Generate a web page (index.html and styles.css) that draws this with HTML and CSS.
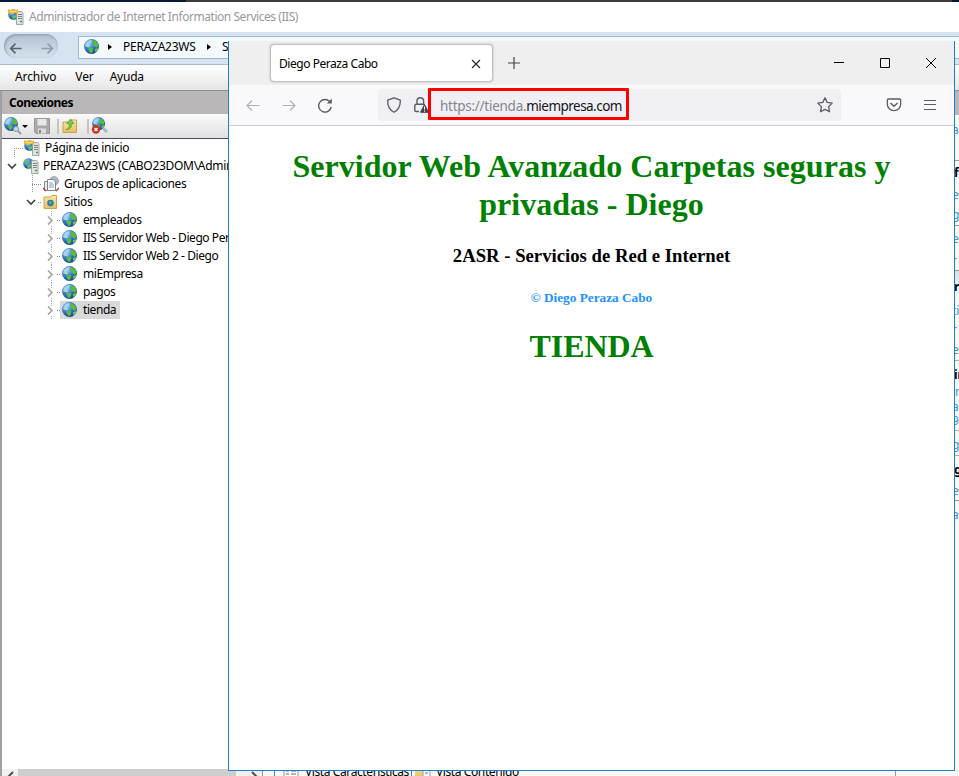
FILE: index.html
```html
<!DOCTYPE html>
<html lang="es">
<head>
<meta charset="utf-8">
<title>Administrador de Internet Information Services (IIS)</title>
<link rel="stylesheet" href="styles.css">
</head>
<body>
<svg class="defs" width="0" height="0">
  <defs>
    <radialGradient id="sea" cx=".35" cy=".3" r=".8"><stop offset="0" stop-color="#9ccaf8"/><stop offset=".5" stop-color="#3474cc"/><stop offset="1" stop-color="#123a8c"/></radialGradient>
    <linearGradient id="fold" x2="0" y2="1"><stop offset="0" stop-color="#fbe9a8"/><stop offset="1" stop-color="#e6bd5c"/></linearGradient>
  </defs>
  <symbol id="globe" viewBox="0 0 16 16"><circle cx="7.500" cy="7.500" r="7.400" fill="url(#sea)"/><path d="M2 4Q4 1 8 1L7 4 5 5 6 8 3 8 1 7Z" fill="#a5d4f0"/><path d="M9 1Q13 2 14.500 6L13 9 10 7 8 4ZM4 8L9 9 9 12 7 14.500 5 12Z" fill="#58bd3e"/><path d="M11 10L14.500 9Q14 12 11 13Z" fill="#71c94b"/></symbol>
  <symbol id="server" viewBox="0 0 16 16"><circle cx="5.500" cy="5.500" r="5.300" fill="url(#sea)"/><path d="M1.500 4L5 1 6 4 3 6ZM4 7L8 6 8 9 5 10.500Z" fill="#67bf55"/><path d="M8.500 2.500H13.500L15 4V15.500H8.500Z" fill="#dde1df" stroke="#8b9492" stroke-width=".8"/><path d="M10 5.500H14M10 7.500H14M10 9.500H14" stroke="#7c8886"/><path d="M12 12.500H14" stroke="#28b03c" stroke-width="1.500"/></symbol>
  <symbol id="home" viewBox="0 0 16 16"><use href="#server"/><path d="M0 0L3 1 5 .3 7 1.500 10 0V5L7 4 4 5 0 4Z" fill="#f3b92c"/><path d="M2 2L5 3 8 2" fill="none" stroke="#ffe692"/></symbol>
  <symbol id="pools" viewBox="0 0 16 16"><circle cx="11" cy="5" r="4.500" fill="#97bcd8" stroke="#d99a8c"/><path d="M1.500 5.500H9V14.500H1.500Z" fill="#eee" stroke="#888"/><path d="M4.500 3.500H10L12.500 6V14.500H4.500Z" fill="#fff" stroke="#718690"/><path d="M6 7H10M6 9H11M6 11H11" stroke="#89a"/><path d="M0 12L3 15M16 12L13 15" stroke="#c33a3a" stroke-width="1.500"/></symbol>
  <symbol id="sites" viewBox="0 0 16 16"><path d="M1 3H8L9 1.500H13.500V14.500H1Z" fill="url(#fold)" stroke="#cfa24c"/><circle cx="7.500" cy="9" r="3.300" fill="#277bb9"/><path d="M5.500 8L8.500 7 8 11Z" fill="#60c34b"/></symbol>
  <symbol id="arrow" viewBox="0 0 16 16"><path d="M14.500 8.500H2M7 3.500L2 8.500L7 13.500" fill="none" stroke="currentColor" stroke-width="1.200"/></symbol>
  <symbol id="boldarrow" viewBox="0 0 14 14"><path d="M13.500 7H2M7 1.800L1.800 7L7 12.200" fill="none" stroke="currentColor" stroke-width="1.800"/></symbol>
  <symbol id="down" viewBox="0 0 10 10"><path d="M1 3L5 7L9 3" fill="none" stroke="#404040" stroke-width="1.600"/></symbol>
  <symbol id="right" viewBox="0 0 10 10"><path d="M3 1.500L7 5.500L3 9.500" fill="none" stroke="#a6a6a6" stroke-width="1.700"/></symbol>
</svg>

<div class="iis">
  <div class="desk"></div>
  <header class="title"><svg class="i16"><use href="#home"/></svg><span>Administrador de Internet Information Services (IIS)</span></header>
  <div class="nav">
    <div class="pill"><svg><use href="#boldarrow"/></svg><svg class="flip"><use href="#boldarrow"/></svg></div>
    <div class="crumbs"><svg class="i16"><use href="#globe"/></svg><i class="tri"></i><span class="crumb">PERAZA23WS</span><i class="tri"></i><span>Sitios</span></div>
  </div>
  <nav class="menu"><span>Archivo</span><span>Ver</span><span class="help">Ayuda</span></nav>
  <div class="main">
    <section class="conn">
      <h2>Conexiones</h2>
      <div class="tools">
        <svg class="i18" viewBox="0 0 18 18"><use href="#globe" width="15" height="15"/><circle cx="12" cy="12" r="2.500" fill="#c6dce9" stroke="#7d98ab"/><path d="M14 14L17 17" stroke="#889aa5" stroke-width="2"/></svg>
        <i class="drop"></i>
        <svg class="i16 disk" viewBox="0 0 16 16"><path d="M.5.500H15.500V15.500H2L.5 14Z" fill="#a9a9a9" stroke="#999"/><path d="M3.500 1H12.500V7.500H3.500Z" fill="#e8e8e8"/><path d="M4 10.500H12V15.500H4Z" fill="#ddd"/><path d="M5 12H7V15H5Z" fill="#888"/></svg>
        <i class="sep"></i>
        <svg class="i16" viewBox="0 0 16 16"><path d="M1 4H7L9 2H14.500V14.500H1Z" fill="url(#fold)" stroke="#c7a453"/><path d="M4 12Q8 10 7 5.500H4.500L8.500 1 12 5.500H10Q10 11 4 12Z" fill="#72cb45" stroke="#3d9a2d" stroke-width=".6"/></svg>
        <i class="sep last"></i>
        <svg class="i18" viewBox="0 0 18 18"><use href="#globe" x="1" width="14" height="14"/><path d="M12 11L16 15" stroke="#a0bacb" stroke-width="3"/><circle cx="5" cy="12.500" r="4.200" fill="#d02c24"/><path d="M3.500 11L6.500 14M6.500 11L3.500 14" stroke="#fff" stroke-width="1.300"/></svg>
      </div>
      <div class="tree">
        <div class="row r0"><svg class="i16"><use href="#home"/></svg><span>Página de inicio</span></div>
        <div class="row r1"><svg class="tw"><use href="#down"/></svg><i class="dots"></i><svg class="i16"><use href="#server"/></svg><span class="long">PERAZA23WS (CABO23DOM\Administrador)</span></div>
        <div class="row r2"><i class="dots wide"></i><svg class="i16"><use href="#pools"/></svg><span class="pool">Grupos de aplicaciones</span></div>
        <div class="row r3"><svg class="tw"><use href="#down"/></svg><i class="dots"></i><svg class="i16"><use href="#sites"/></svg><span>Sitios</span></div>
        <div class="row site"><svg class="tw"><use href="#right"/></svg><i class="dots"></i><svg class="i16"><use href="#globe"/></svg><span>empleados</span></div>
        <div class="row site"><svg class="tw"><use href="#right"/></svg><i class="dots"></i><svg class="i16"><use href="#globe"/></svg><span>IIS Servidor Web - Diego Peraza</span></div>
        <div class="row site"><svg class="tw"><use href="#right"/></svg><i class="dots"></i><svg class="i16"><use href="#globe"/></svg><span>IIS Servidor Web 2 - Diego</span></div>
        <div class="row site"><svg class="tw"><use href="#right"/></svg><i class="dots"></i><svg class="i16"><use href="#globe"/></svg><span>miEmpresa</span></div>
        <div class="row site"><svg class="tw"><use href="#right"/></svg><i class="dots"></i><svg class="i16"><use href="#globe"/></svg><span>pagos</span></div>
        <div class="row site sel"><svg class="tw"><use href="#right"/></svg><i class="dots"></i><div class="hit"><svg class="i16"><use href="#globe"/></svg><span>tienda</span></div></div>
      </div>
      <div class="hscroll"><svg viewBox="0 0 16 8"><path d="M11 3L7 7L8 8" fill="none" stroke="#505050" stroke-width="2"/></svg><i></i><svg viewBox="0 0 16 8"><path d="M6 3L10 7L9 8" fill="none" stroke="#505050" stroke-width="2"/></svg></div>
    </section>
    <section class="center">
      <div class="views">
        <span class="view on"><svg class="i16" viewBox="0 0 16 16"><path d="M1 .5H15V15H1Z" fill="#fff" stroke="#999"/><path d="M3 5H6M3 8H6M3 11H6M8 5H13M8 8H13M8 11H13" stroke="#667"/></svg><b>Vista Características</b></span>
        <span class="view"><svg class="i16" viewBox="0 0 16 16"><path d="M0 2H9V15H0Z" fill="url(#fold)"/><path d="M8 3H15V15H8Z" fill="#f5f8fc" stroke="#99a"/><path d="M10 7H13M10 10H13" stroke="#48c"/></svg><b>Vista Contenido</b></span>
      </div>
    </section>
    <aside class="actions">
      <p class="a1">ar</p><p class="a2 k">fi</p><p class="a3">e</p><p class="a4">g</p><p class="a5">el</p><p class="a6">r</p><p class="a7 k">ra</p><p class="a8">ti</p><p class="a9">r</p><p class="a10">e</p><p class="a11 k">in</p><p class="a12">in</p><p class="a13">a</p><p class="a14">9</p><p class="a15">g</p><p class="a16 k">g</p><p class="a17">e</p><p class="a18">a</p>
    </aside>
  </div>
</div>

<div class="browser">
  <div class="tabs">
    <div class="tab"><span>Diego Peraza Cabo</span><svg viewBox="0 0 10 10" width="10" height="10"><path d="M1 1L9 9M9 1L1 9" stroke="#222" stroke-width="1.100"/></svg></div>
    <svg class="plus" viewBox="0 0 12 12"><path d="M6 0V12M0 6H12" stroke="#444" stroke-width="1.200"/></svg>
    <div class="wc">
      <svg viewBox="0 0 12 12"><path d="M1 5.500H11" stroke="#000"/></svg>
      <svg viewBox="0 0 12 12"><path d="M1.500 1.500H10.500V10.500H1.500Z" fill="none" stroke="#000"/></svg>
      <svg viewBox="0 0 12 12"><path d="M1 1L11 11M11 1L1 11" stroke="#000"/></svg>
    </div>
  </div>
  <div class="bar">
    <svg class="b off"><use href="#arrow"/></svg>
    <svg class="b off flip fwd"><use href="#arrow"/></svg>
    <svg class="b" viewBox="0 0 16 16"><path d="M14.200 10A6.300 6.300 0 1 1 12.600 4.500" fill="none" stroke="#5b5b66" stroke-width="1.400"/><path d="M14.800 1.500V6.500H9.800Z" fill="#5b5b66"/></svg>
    <div class="url">
      <svg class="b" viewBox="0 0 16 16"><path d="M8 .8L14.300 3.200Q14.800 11.500 8 15.200Q1.200 11.500 1.700 3.200Z" fill="none" stroke="#5b5b66" stroke-width="1.300" stroke-linejoin="round"/></svg>
      <svg class="b lock" viewBox="0 0 16 16"><path d="M4 7V4A3.300 3.300 0 0 1 10.600 4V7M6 14.500H3A1.200 1.200 0 0 1 1.800 13.300V8.500A1.200 1.200 0 0 1 3 7.300H11.500" fill="none" stroke="#5b5b66" stroke-width="1.400"/><path d="M11.500 7.500L15.500 15.300H7.500Z" fill="#45454f" stroke="#45454f" stroke-linejoin="round"/><path d="M11.500 9.500V12.500M11.500 13.500V14.700" stroke="#fff"/></svg>
      <div class="mark"><span>https://tienda.</span><em>miempresa.com</em></div>
      <svg class="b star" viewBox="0 0 16 16"><path d="M8 .8L10.200 5.400 15.200 6.100 11.600 9.600 12.500 14.800 8 12.400 3.500 14.800 4.400 9.600 .8 6.100 5.800 5.400Z" fill="none" stroke="#5b5b66" stroke-width="1.300" stroke-linejoin="round"/></svg>
    </div>
    <svg class="b pocket" viewBox="0 0 16 16"><path d="M2.500 2H13.500A1.300 1.300 0 0 1 14.700 3.300V7A6.700 6.700 0 0 1 1.300 7V3.300A1.300 1.300 0 0 1 2.500 2Z" fill="none" stroke="#5b5b66" stroke-width="1.300"/><path d="M4.500 6L8 9.300 11.500 6" fill="none" stroke="#5b5b66" stroke-width="1.500"/></svg>
    <svg class="b burger" viewBox="0 0 16 16"><path d="M2 3.500H14M2 7.500H14M2 12.500H14" stroke="#5b5b66" stroke-width="1.200"/></svg>
  </div>
  <main class="page">
    <h1>Servidor Web Avanzado Carpetas seguras y privadas - Diego</h1>
    <h3>2ASR - Servicios de Red e Internet</h3>
    <h5>© Diego Peraza Cabo</h5>
    <h1 class="shop">TIENDA</h1>
  </main>
</div>
</body>
</html>
```
FILE: styles.css
```css
* { box-sizing: border-box; }
body { margin: 0; width: 959px; height: 776px; overflow: hidden; position: relative; background: #fff; font: 12px/18px "Noto Sans", "Open Sans", sans-serif; color: #000; }
h1, h2, h3, h5, p { margin: 0; }
svg { display: block; flex: none; }
.defs { position: absolute; }
.i16 { width: 16px; height: 16px; }
.i18 { width: 18px; height: 18px; }
.flip { transform: scaleX(-1); }

.iis { width: 959px; height: 776px; display: flex; flex-direction: column; overflow: hidden; white-space: nowrap; }
.desk { height: 2px; flex: none; background: linear-gradient(90deg, #071a33 186px, #3d3b3b 186px 952px, #061532 952px); }
.title { height: 30px; flex: none; display: flex; align-items: center; padding-left: 8px; gap: 5px; color: #999; letter-spacing: -.45px; background: #fff; }
.nav { height: 33px; flex: none; display: flex; padding: 4px 0 5px 4px; background: #d6e4f1; border-bottom: 1px solid #a9b9ca; }
.pill { width: 54px; height: 24px; margin-top: -2px; border-radius: 12px; background: linear-gradient(#b3c1d0, #d5e1ed); box-shadow: inset 1px 1px 3px #8798aa; display: flex; align-items: center; justify-content: space-between; padding: 4px 4px 0 5px; color: #59636d; }
.pill svg { width: 13px; height: 13px; }
.pill .flip { color: #8e9dac; }
.crumbs { flex: 1; margin-left: 20px; height: 23px; border: 1px solid #a4b5c8; border-right: 0; background: #f4f9fd; display: flex; align-items: center; padding: 0 0 2px 5px; }
.tri { width: 0; height: 0; border: 3.5px solid transparent; border-left: 4px solid #000; border-right: 0; margin: 0 11px 0 8px; }
.crumb { width: 73px; letter-spacing: -.25px; margin-right: 3px; }
.menu { height: 25px; flex: none; display: flex; padding: 3px 15px; gap: 19px; background: linear-gradient(#fff, #e5e5e5); letter-spacing: -.1px; }
.menu .help { margin-left: -3px; letter-spacing: -.25px; }
.main { flex: 1; display: flex; min-height: 0; border-top: 1px solid #8d8d8d; }
.conn { width: 263px; flex: none; display: flex; flex-direction: column; border-left: 2px solid #a0a0a0; border-right: 1px solid #999; }
.conn h2 { height: 23px; font: bold 12px/23px "Noto Sans", sans-serif; letter-spacing: -.5px; padding-left: 7px; background: #b9b7b8; }
.tools { height: 25px; display: flex; align-items: center; padding-left: 2px; background: linear-gradient(#fafafa, #e0e0e0); border-bottom: 1px solid #47466b; }
.drop { border: 3px solid transparent; border-top: 3px solid #000; border-bottom: 0; margin-right: 6px; }
.disk { margin-right: 7px; }
.sep { width: 2px; height: 15px; background: #c8c5b4; margin-right: 3px; }
.sep.last { margin: 0 2px 0 9px; }
.tree { flex: 1; background: #fff; overflow: hidden; }
.row { height: 18px; display: flex; align-items: center; }
.row span { margin-left: 5px; letter-spacing: -.28px; }
.row .long { letter-spacing: -.3px; margin-left: 4px; }
.row .pool { letter-spacing: -.38px; }
.tw { width: 10px; height: 10px; }
.dots { width: 3px; margin: 0 2px; border-top: 1px dotted #888; }
.dots.wide { width: 9px; }
.r0 { padding-left: 22px; background: repeating-linear-gradient(90deg, #999 0 1px, transparent 1px 2px) 12px 9px / 10px 1px no-repeat, repeating-linear-gradient(#999 0 1px, transparent 1px 2px) 12px 9px / 1px 9px no-repeat; }
.r1 { padding-left: 5px; }
.r1 .dots { margin: 0 2px 0 3px; }
.r1 .i16 { margin-left: 1px; }
.r2 { padding-left: 28px; background: repeating-linear-gradient(#999 0 1px, transparent 1px 2px) 30px 0 / 1px 100% no-repeat; }
.r3 { padding-left: 24px; }
.site { padding-left: 43px; background: repeating-linear-gradient(#aaa 0 1px, transparent 1px 2px) 49px 0 / 1px 5px no-repeat, repeating-linear-gradient(#aaa 0 1px, transparent 1px 2px) 49px 15px / 1px 3px no-repeat; }
.site span { margin-left: 5px; letter-spacing: -.43px; }
.hit { display: flex; align-items: center; height: 18px; background: #d9d9d9; margin-left: -2px; padding: 0 4px 0 2px; }
.hscroll { height: 7px; flex: none; display: flex; background: #f0f0f0; }
.hscroll svg { width: 16px; height: 8px; }
.hscroll svg:last-child { margin-left: 10px; }
.hscroll i { width: 218px; background: #cdcdcd; }
.center { flex: 1; display: flex; flex-direction: column; justify-content: flex-end; background: #f7f7f7; }
.views { height: 11px; display: flex; overflow: hidden; margin-left: 11px; width: 622px; border-right: 1px solid #999; }
.view { display: flex; gap: 5px; height: 18px; padding-left: 3px; margin-top: -2px; }
.view b { font-weight: 400; letter-spacing: -.4px; }
.on { border: 1px solid #3189d4; width: 138px; padding-left: 8px; gap: 6px; margin-top: -3px; }

.actions { width: 4px; flex: none; background: #f7f7f7; overflow: hidden; color: #4c94cc; border-top: 24px solid #b9b7b8; display: flex; flex-direction: column; }
.actions p { flex: none; height: 20px; line-height: 20px; text-indent: -3px; overflow: hidden; }
.actions .k { color: #000; font-weight: 700; text-indent: -1px; }
.actions .a1 { height: 46px; line-height: 30px; border-bottom: 1px solid #999; }
.actions .a2 { height: 24px; line-height: 24px; }
.actions .a4 { height: 21px; border-bottom: 1px solid #999; }
.actions .a5 { height: 25px; line-height: 25px; }
.actions .a6 { height: 20px; border-bottom: 1px solid #999; }
.actions .a7 { height: 30px; line-height: 32px; background: linear-gradient(#ddd, #f7f7f7 20px); }
.actions .a8 { height: 19px; }
.actions .a10 { height: 21px; border-bottom: 1px solid #aaa; }
.actions .a11 { height: 25px; line-height: 27px; }
.actions .a12 { height: 14px; line-height: 12px; }
.actions .a13 { height: 14px; line-height: 14px; }
.actions .a14 { height: 17px; line-height: 14px; border-bottom: 1px solid #aaa; }
.actions .a15 { height: 25px; line-height: 27px; border-bottom: 1px solid #aaa; }
.actions .a16 { height: 25px; line-height: 28px; }
.actions .a17 { border-bottom: 1px solid #999; }
.actions .a18 { height: 28px; line-height: 28px; }

.browser { position: absolute; left: 228px; top: 41px; width: 727px; height: 730px; border: 1px solid #1a80d0; border-top: 0; background: #fff; display: flex; flex-direction: column; }
.tabs { height: 44px; flex: none; background: #efefef; display: flex; align-items: center; padding-left: 41px; }
.tab { width: 223px; height: 38px; border: 1px solid #c0c0c4; border-radius: 4px; background: #fff; box-shadow: 0 0 2px #aaa; display: flex; align-items: center; justify-content: space-between; padding: 1px 11px 0 8px; letter-spacing: -.45px; }
.plus { width: 12px; height: 12px; margin-left: 15px; }
.wc { margin-left: auto; display: flex; gap: 34px; padding-right: 17px; }
.wc svg { width: 12px; height: 12px; }
.bar { height: 41px; flex: none; background: #f9f9fb; border-bottom: 1px solid #cccccf; display: flex; align-items: center; padding-left: 16px; }
.b { width: 16px; height: 16px; color: #5b5b66; }
.off { opacity: .45; }
.fwd { margin: 0 20px; }
.url { width: 463px; height: 32px; margin-left: 45px; border-radius: 4px; background: #f0f0f4; display: flex; align-items: center; padding-left: 8px; }
.lock { margin-left: 11px; }
.mark { width: 201px; height: 32px; margin-left: -1px; margin-top: -2px; border: 3px solid #fe0000; border-radius: 1px; padding-left: 9px; font-size: 13.5px; line-height: 30px; white-space: nowrap; color: #85858c; }
.mark span { letter-spacing: -.27px; }
.mark em { font-style: normal; letter-spacing: -.53px; color: #15141a; }
.star { margin-left: 188px; }
.pocket { margin-left: 45px; }
.burger { margin-left: 20px; }
.page { flex: 1; padding: 21px 8px 0; text-align: center; font-family: "Liberation Serif", "Times New Roman", serif; color: green; }
.page h1 { font-size: 32px; line-height: 38px; padding: 0 50px; letter-spacing: .04px; }
.page h3 { margin-top: 22px; font-size: 18.72px; line-height: 22px; color: #000; }
.page h5 { margin-top: 23px; font-size: 13.28px; line-height: 16px; color: #1e90ff; }
.page .shop { margin-top: 21px; letter-spacing: -.1px; }
```
